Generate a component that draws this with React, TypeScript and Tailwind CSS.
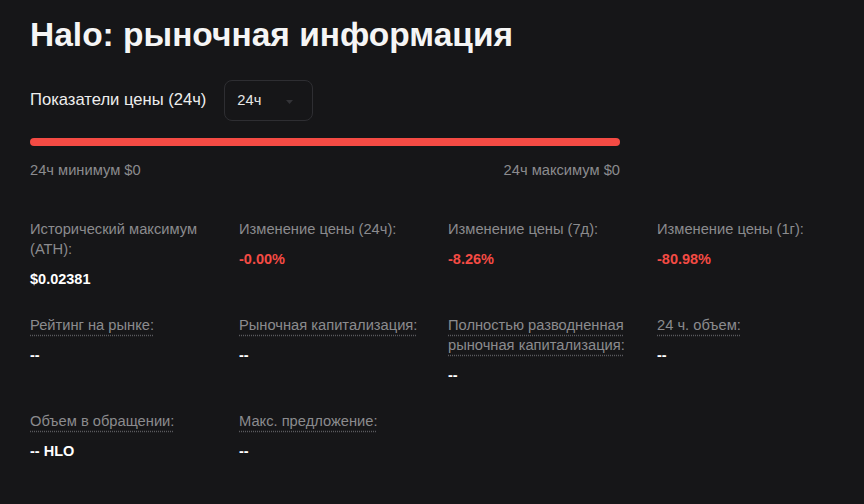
const stats: { label: string; value: string; tone?: "red"; hint?: boolean }[][] = [
  [
    { label: "Исторический максимум (ATH):", value: "$0.02381" },
    { label: "Изменение цены (24ч):", value: "-0.00%", tone: "red" },
    { label: "Изменение цены (7д):", value: "-8.26%", tone: "red" },
    { label: "Изменение цены (1г):", value: "-80.98%", tone: "red" },
  ],
  [
    { label: "Рейтинг на рынке:", value: "--", hint: true },
    { label: "Рыночная капитализация:", value: "--", hint: true },
    { label: "Полностью разводненная рыночная капитализация:", value: "--", hint: true },
    { label: "24 ч. объем:", value: "--", hint: true },
  ],
  [
    { label: "Объем в обращении:", value: "-- HLO", hint: true },
    { label: "Макс. предложение:", value: "--", hint: true },
  ],
];

function Stat({ label, value, tone, hint }: { label: string; value: string; tone?: "red"; hint?: boolean }) {
  return (
    <div className="flex flex-col">
      <div className="text-[14.7px] leading-5 text-[#8b8b8e]">
        <span
          className={
            hint ? "underline decoration-dotted decoration-[#5a5a5e] underline-offset-[5px]" : ""
          }
        >
          {label}
        </span>
      </div>
      <div
        className={`mt-[10px] text-[14.5px] font-bold leading-5 ${
          tone === "red" ? "text-[#f44b44]" : "text-white"
        }`}
      >
        {value}
      </div>
    </div>
  );
}

export default function App() {
  return (
    <div className="min-h-[504px] w-full bg-[#161618] px-[30px] pt-[16px] font-['Liberation_Sans',Arial,sans-serif]">
      <h1 className="text-[33.5px] font-bold leading-[38px] text-[#f5f5f5]">Halo: рыночная информация</h1>

      <div className="mt-[26px] flex items-center gap-[18px]">
        <span className="text-[16.6px] text-[#eeeeee]">Показатели цены (24ч)</span>
        <div className="flex h-[41px] w-[89px] items-center justify-between rounded-lg border border-[#2e2e32] pl-3 pr-[19px]">
          <span className="text-[14.7px] text-[#e6e6e6]">24ч</span>
          <svg width="7" height="4" viewBox="0 0 7 4" className="mt-[2px]">
            <path d="M0 0h7L3.5 4z" fill="#333337" />
          </svg>
        </div>
      </div>

      <div className="mt-[17px] w-[590px]">
        <div className="h-2 w-full rounded-full bg-[#f44b44]" />
        <div className="mt-[14px] flex justify-between text-[14.7px] leading-5 text-[#8b8b8e]">
          <span>24ч минимум $0</span>
          <span>24ч максимум $0</span>
        </div>
      </div>

      <div className="mt-[39px] flex flex-col gap-[26px] pb-6">
        {stats.map((row, i) => (
          <div key={i} className="grid w-[820px] grid-cols-4 gap-x-4">
            {row.map((s) => (
              <Stat key={s.label} {...s} />
            ))}
          </div>
        ))}
      </div>
    </div>
  );
}
